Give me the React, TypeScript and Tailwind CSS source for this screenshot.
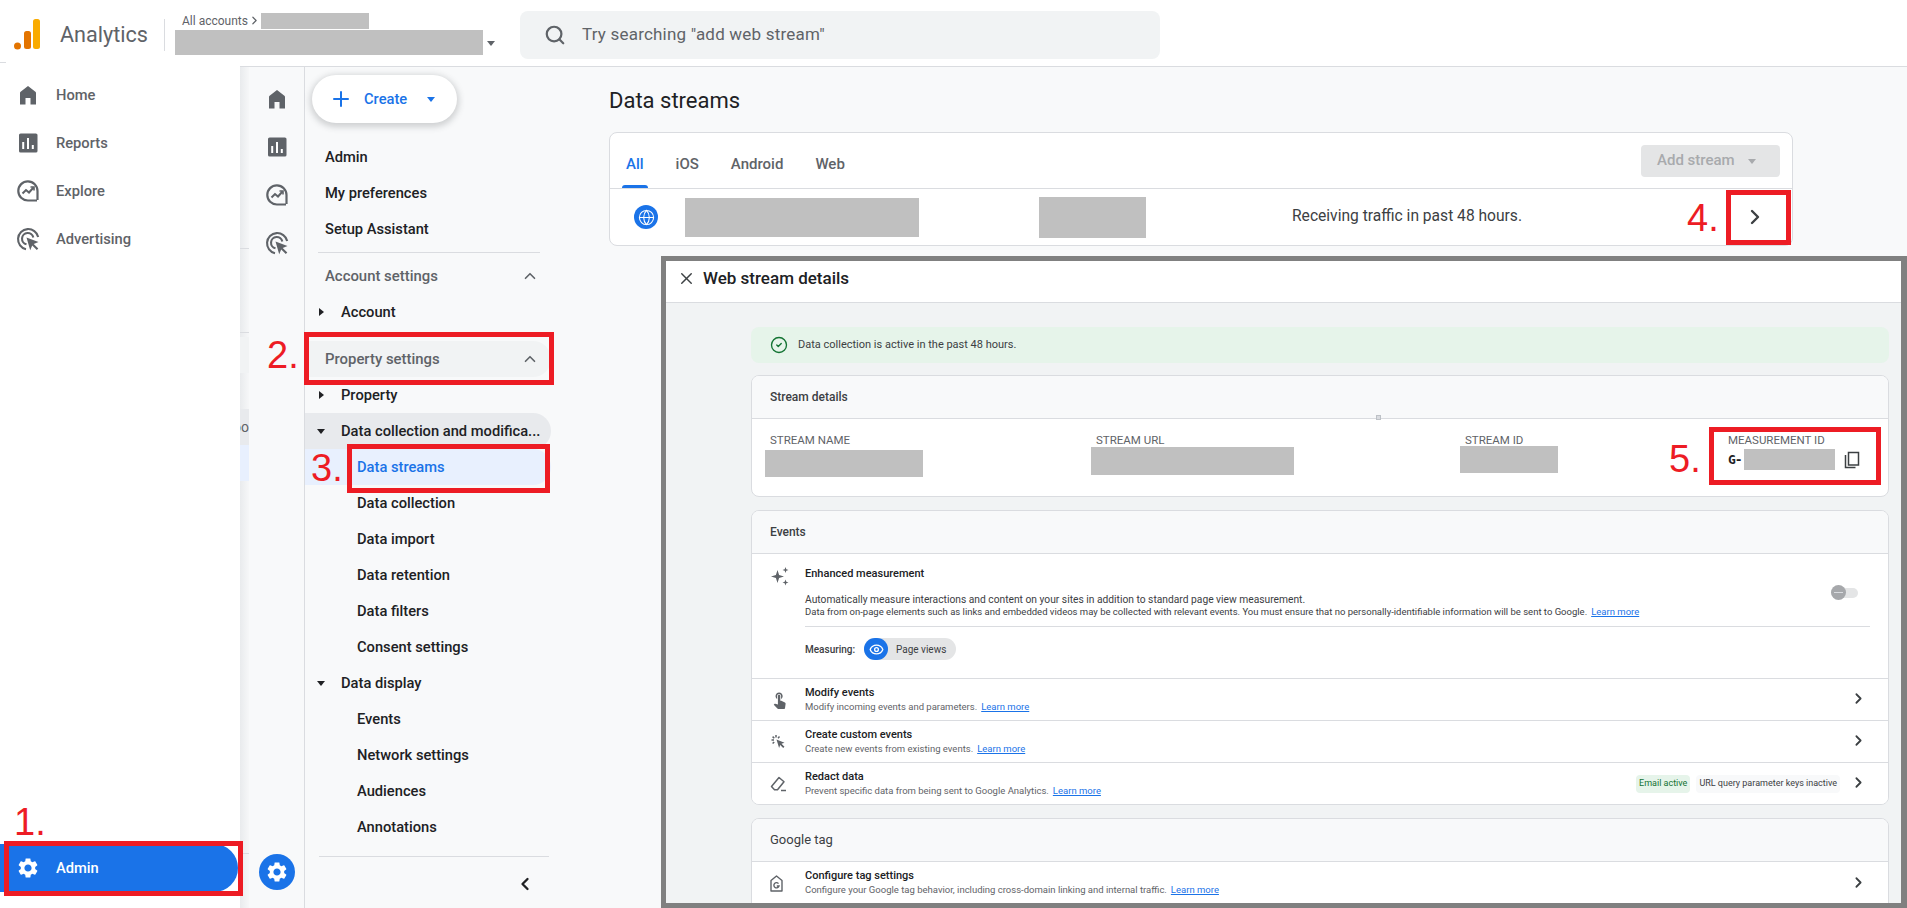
import React from 'react'
import {
  ChevronLeft,
  ChevronRight,
  ChevronUp,
  CircleCheck,
  Eye,
  Globe,
  Plus,
  Search,
  X,
} from 'lucide-react'

const gearPath =
  'M19.14 12.94c.04-.3.06-.61.06-.94 0-.32-.02-.64-.07-.94l2.03-1.58c.18-.14.23-.41.12-.61l-1.92-3.32c-.12-.22-.37-.29-.59-.22l-2.39.96c-.5-.38-1.03-.7-1.62-.94l-.36-2.54c-.04-.24-.24-.41-.48-.41h-3.84c-.24 0-.43.17-.47.41l-.36 2.54c-.59.24-1.13.57-1.62.94l-2.39-.96c-.22-.08-.47 0-.59.22L2.74 8.87c-.12.21-.08.47.12.61l2.03 1.58c-.05.3-.09.63-.09.94s.02.64.07.94l-2.03 1.58c-.18.14-.23.41-.12.61l1.92 3.32c.12.22.37.29.59.22l2.39-.96c.5.38 1.03.7 1.62.94l.36 2.54c.05.24.24.41.48.41h3.84c.24 0 .44-.17.47-.41l.36-2.54c.59-.24 1.13-.56 1.62-.94l2.39.96c.22.08.47 0 .59-.22l1.92-3.32c.12-.22.07-.47-.12-.61l-2.01-1.58zM12 15.6c-1.98 0-3.6-1.62-3.6-3.6s1.62-3.6 3.6-3.6 3.6 1.62 3.6 3.6-1.62 3.6-3.6 3.6z'

function HomeIcon() {
  return (
    <svg width="24" height="24" viewBox="0 0 24 24" fill="#5f6368">
      <path d="M4 21.5V10c0-.5.2-.9.6-1.2L12 3l7.4 5.8c.4.3.6.7.6 1.2v11.5h-5.5V15h-5v6.5z" />
    </svg>
  )
}

function ReportsIcon() {
  return (
    <svg width="24" height="24" viewBox="0 0 24 24">
      <rect x="3" y="2.5" width="18.5" height="19" rx="1.6" fill="#5f6368" />
      <path d="M7.2 11v7M12 7v11M16.8 14v4" stroke="#fff" strokeWidth="2" />
    </svg>
  )
}

function ExploreIcon() {
  return (
    <svg width="24" height="24" viewBox="0 0 24 24" fill="none" stroke="#5f6368">
      <path d="M21 21.5H12A9.6 9.6 0 1 1 21.5 12v9" strokeWidth="2.2" />
      <path d="M6.5 14.5l3.5-3.5 3 2.5 4.5-5" strokeWidth="2" />
      <path d="M14.5 8h3.5v3.5" strokeWidth="1.6" />
    </svg>
  )
}

function AdvertisingIcon() {
  return (
    <svg width="24" height="24" viewBox="0 0 24 24" fill="none" stroke="#5f6368">
      <path d="M10 22.2A10.2 10.2 0 1 1 22.2 10" strokeWidth="2.1" />
      <path d="M10.5 17.3A5.7 5.7 0 1 1 17.3 10.5" strokeWidth="2.1" />
      <path d="M10.5 10.5l12 4.4-4.8 2 4.6 4.7-1.5 1.5-4.6-4.6-2 4.7z" fill="#5f6368" stroke="none" />
    </svg>
  )
}

function GearIcon({ size }: { size: number }) {
  return (
    <svg width={size} height={size} viewBox="0 0 24 24" fill="#fff">
      <path d={gearPath} />
    </svg>
  )
}

function TouchIcon() {
  return (
    <svg width="19" height="19" viewBox="0 0 24 24" fill="#5f6368">
      <path d="M9 11.24V7.5C9 6.12 10.12 5 11.5 5S14 6.12 14 7.5v3.74c1.21-.81 2-2.18 2-3.74C16 5.01 13.99 3 11.5 3S7 5.01 7 7.5c0 1.56.79 2.93 2 3.74zm9.84 4.63l-4.54-2.26c-.17-.07-.35-.11-.54-.11H13v-6c0-.83-.67-1.5-1.5-1.5S10 6.67 10 7.5v10.74l-3.43-.72c-.08-.01-.15-.03-.24-.03-.31 0-.59.13-.79.33l-.79.8 4.94 4.94c.27.27.65.44 1.06.44h6.79c.75 0 1.33-.55 1.44-1.28l.75-5.27c.01-.07.02-.14.02-.2 0-.62-.38-1.16-.91-1.38z" />
    </svg>
  )
}

function ClickIcon() {
  return (
    <svg width="16" height="16" viewBox="0 0 16 16" fill="none" stroke="#5f6368" strokeWidth="1.5">
      <path d="M6.5 5.5l8 3.2-3 1.1 3 3-1.3 1.3-3-3-1.1 3z" fill="#5f6368" stroke="none" />
      <path d="M6 1v2.5M1.5 6H4M2.6 2.6l1.7 1.7M9.5 2.6L8 4.2M2.6 9.5l1.6-1.5" />
    </svg>
  )
}

function EraserIcon() {
  return (
    <svg width="17" height="16" viewBox="0 0 17 16" fill="none" stroke="#5f6368" strokeWidth="1.5">
      <path d="M1.5 10.5L9 1.5l5 4.2-6.5 8H4.5z" strokeLinejoin="round" />
      <path d="M11 14.5h5" />
    </svg>
  )
}

function TagIcon() {
  return (
    <svg width="13" height="17" viewBox="0 0 13 17" fill="none" stroke="#5f6368" strokeWidth="1.4">
      <path d="M1 5.5L6.5 1 12 5.5V16H1z" strokeLinejoin="round" />
      <path d="M8.5 8.6a2.6 2.6 0 1 0 .5 2.4H6.8" />
    </svg>
  )
}

function Caret({ color = '#5f6368', down = true }: { color?: string; down?: boolean }) {
  return (
    <svg width="10" height="10" viewBox="0 0 10 10" fill={color}>
      {down ? <path d="M1 3h8L5 8z" /> : <path d="M3 1l5 4-5 4z" />}
    </svg>
  )
}

function Redacted({ className }: { className: string }) {
  return <div className={`bg-[#c0c0c0] ${className}`} />
}

function Badge({ className, children }: { className: string; children: React.ReactNode }) {
  return (
    <div className={`absolute font-['Liberation_Sans',sans-serif] text-[38px] leading-none text-[#ed1c24] ${className}`}>
      {children}
    </div>
  )
}

function RedBox({ className }: { className: string }) {
  return <div className={`absolute border-[5px] border-[#ed1c24] ${className}`} />
}

function SideItem({ icon, label }: { icon: React.ReactNode; label: string }) {
  return (
    <div className="flex h-12 items-center pl-[16px]">
      <div className="flex w-[40px]">{icon}</div>
      <span className="text-[14.7px] font-medium text-[#5f6368]">{label}</span>
    </div>
  )
}

function NavLink({ label, depth = 0, expand }: { label: string; depth?: number; expand?: 'open' | 'closed' }) {
  return (
    <div className="flex h-9 items-center text-[14.7px] font-medium text-[#202124]">
      <div className="flex w-[36px] shrink-0 justify-end pr-[15px]">
        {expand && <Caret color="#202124" down={expand === 'open'} />}
      </div>
      <span className={depth === 1 ? 'pl-4' : ''}>{label}</span>
    </div>
  )
}

function SectionHead({ label, active }: { label: string; active?: boolean }) {
  return (
    <div className={`flex h-9 w-[246px] items-center justify-between rounded-r-full pl-5 pr-3 text-[14.9px] font-medium text-[#5f6368] ${active ? 'bg-[#f1f3f4]' : ''}`}>
      {label}
      <ChevronUp size={18} strokeWidth={2.2} color="#5f6368" />
    </div>
  )
}

function LearnMore() {
  return <span className="ml-1 text-[#1a73e8] underline">Learn more</span>
}

function EventRow({ icon, title, sub, tail, border = true }: { icon: React.ReactNode; title: string; sub: string; tail?: React.ReactNode; border?: boolean }) {
  return (
    <div className={`flex h-[42px] items-center bg-white pl-[18px] pr-[21px] ${border ? 'border-t border-[#dadce0]' : ''}`}>
      <div className="flex w-[35px] shrink-0">{icon}</div>
      <div className="flex-1">
        <div className="text-[11px] leading-[14px] font-medium text-[#202124]">{title}</div>
        <div className="text-[9.5px] leading-[14px] text-[#5f6368]">
          {sub}
          <LearnMore />
        </div>
      </div>
      {tail}
      <ChevronRight size={17} strokeWidth={2.5} color="#3c4043" className="ml-[10px] -mt-[2px]" />
    </div>
  )
}

function MetaCol({ label, className, children }: { label: string; className: string; children: React.ReactNode }) {
  return (
    <div className={`shrink-0 ${className}`}>
      <div className="text-[11.5px] leading-[14px] text-[#5f6368]">{label}</div>
      {children}
    </div>
  )
}

export default function App() {
  return (
    <div className="relative flex h-[908px] w-[1907px] flex-col overflow-hidden bg-[#f8f9fa] font-['Roboto',sans-serif]">
      {/* top bar */}
      <header className="flex h-[67px] shrink-0 items-center border-b border-[#dadce0] bg-white pt-[4px]">
        <svg width="28" height="32" viewBox="0 0 28 32" className="ml-[13px]">
          <circle cx="4.5" cy="27" r="3.5" fill="#e37400" />
          <rect x="11" y="12" width="7" height="18" rx="2.5" fill="#e37400" />
          <rect x="20" y="0" width="7" height="30" rx="2.5" fill="#f9ab00" />
        </svg>
        <span className="ml-[19px] text-[21.6px] text-[#5f6368]">Analytics</span>
        <div className="ml-[16px] h-8 w-px bg-[#dadce0]" />
        <div className="-mt-[4px] ml-[10px] w-[345px]">
          <div className="flex h-[19px] items-center pl-[7px] text-[12px] text-[#5f6368]">
            All accounts
            <ChevronRight size={13} strokeWidth={2.2} />
            <Redacted className="h-4 w-[108px]" />
          </div>
          <div className="flex items-center">
            <Redacted className="h-[25px] w-[308px]" />
            <div className="ml-[3px]"><Caret /></div>
          </div>
        </div>
        <div className="flex h-12 w-[640px] items-center rounded-lg bg-[#f1f3f4] pl-[24px] text-[17px] tracking-[0.2px] text-[#5f6368]">
          <Search size={22} strokeWidth={2.4} color="#5f6368" />
          <span className="ml-[16px]">Try searching "add web stream"</span>
        </div>
      </header>

      <div className="flex min-h-0 flex-1">
        {/* slide-out nav */}
        <aside className="relative z-10 -mt-[3px] flex w-[240px] shrink-0 flex-col bg-white pt-[7px]">
          <SideItem icon={<HomeIcon />} label="Home" />
          <SideItem icon={<ReportsIcon />} label="Reports" />
          <SideItem icon={<ExploreIcon />} label="Explore" />
          <SideItem icon={<AdvertisingIcon />} label="Advertising" />
          <div className="mt-auto mb-[16px] flex h-12 w-[238px] items-center rounded-r-full bg-[#1a73e8] pl-[16px] text-[14.7px] font-medium text-white">
            <div className="flex w-[40px]"><GearIcon size={24} /></div>
            Admin
          </div>
        </aside>

        {/* what is left of the page under the slide-out */}
        <div className="flex w-[9px] shrink-0 flex-col bg-gradient-to-r from-[#e9ebed] to-[#f6f7f8] text-[14px] text-[#5f6368]">
          <div className="mt-[181px] h-px bg-[#dadce0]" />
          <div className="mt-[83px] h-px bg-[#dadce0]" />
          <div className="mt-[4px] h-9 bg-[#f1f3f4]" />
          <div className="mt-9 flex h-9 items-center justify-end overflow-hidden bg-[#e8eaed]">oo</div>
          <div className="h-9 bg-[#e8f0fe]" />
          <div className="mt-[372px] h-px bg-[#dadce0]" />
        </div>

        {/* icon rail */}
        <div className="flex w-[56px] shrink-0 flex-col items-center border-r border-[#dadce0] pt-[8px]">
          {[<HomeIcon key="h" />, <ReportsIcon key="r" />, <ExploreIcon key="e" />, <AdvertisingIcon key="a" />].map((icon) => (
            <div key={icon.key} className="flex h-12 items-center">{icon}</div>
          ))}
          <div className="mt-auto mb-[18px] flex h-9 w-9 items-center justify-center rounded-full bg-[#1a73e8]">
            <GearIcon size={24} />
          </div>
        </div>

        {/* admin nav */}
        <nav className="flex w-[248px] shrink-0 flex-col pt-[8px]">
          <div className="ml-[7px] flex h-12 w-[145px] items-center rounded-full bg-white pl-[17px] text-[14.7px] font-medium text-[#1a73e8] shadow-[0_2px_6px_2px_rgba(60,64,67,0.22)]">
            <Plus size={24} strokeWidth={2} color="#1a73e8" />
            <span className="ml-[11px]">Create</span>
            <span className="ml-[19px]"><Caret color="#1a73e8" /></span>
          </div>
          <div className="mt-4 pl-5 text-[14.7px] font-medium text-[#202124]">
            <div className="flex h-9 items-center">Admin</div>
            <div className="flex h-9 items-center">My preferences</div>
            <div className="flex h-9 items-center">Setup Assistant</div>
          </div>
          <div className="mt-[5px] mb-[5px] ml-[13px] h-px w-[222px] bg-[#dadce0]" />
          <SectionHead label="Account settings" />
          <NavLink label="Account" expand="closed" />
          <div className="h-[11px]" />
          <SectionHead label="Property settings" active />
          <NavLink label="Property" expand="closed" />
          <div className="w-[246px] rounded-r-full bg-[#e8eaed]">
            <NavLink label="Data collection and modifica..." expand="open" />
          </div>
          <div className="w-[246px] rounded-r-full bg-[#e8f0fe]">
            <div className="flex h-9 items-center pl-[52px] text-[14.7px] font-medium text-[#1a73e8]">Data streams</div>
          </div>
          <NavLink label="Data collection" depth={1} />
          <NavLink label="Data import" depth={1} />
          <NavLink label="Data retention" depth={1} />
          <NavLink label="Data filters" depth={1} />
          <NavLink label="Consent settings" depth={1} />
          <NavLink label="Data display" expand="open" />
          <NavLink label="Events" depth={1} />
          <NavLink label="Network settings" depth={1} />
          <NavLink label="Audiences" depth={1} />
          <NavLink label="Annotations" depth={1} />
          <div className="mt-[11px] ml-[14px] h-px w-[230px] bg-[#dadce0]" />
          <div className="mt-[17px] flex justify-end pr-[18px]">
            <ChevronLeft size={20} strokeWidth={2.8} color="#202124" />
          </div>
        </nav>

        {/* main column */}
        <main className="flex min-w-0 flex-1 flex-col">
          <h1 className="mt-[18px] h-[47px] pl-[56px] text-[22px] leading-8 text-[#202124]">Data streams</h1>
          <div className="ml-[56px] h-[114px] w-[1184px] shrink-0 overflow-hidden rounded-lg border border-[#dadce0] bg-white">
            <div className="flex h-[56px] items-center justify-between border-b border-[#dadce0] pl-[12px] pr-[12px] text-[15px] font-medium text-[#5f6368]">
              <div className="flex h-full gap-[32px]">
                <div className="relative -mr-[4px] flex items-center px-[4px] pt-[8px] text-[#1a73e8]">
                  All
                  <div className="absolute right-0 bottom-0 left-0 h-[3px] rounded-t-sm bg-[#1a73e8]" />
                </div>
                <div className="flex items-center pt-[8px]">iOS</div>
                <div className="flex items-center pt-[8px]">Android</div>
                <div className="flex items-center pt-[8px]">Web</div>
              </div>
              <div className="flex h-8 w-[139px] items-center rounded bg-[#e4e5e6] pl-4 text-[#a8aaad]">
                Add stream
                <span className="ml-[12px]"><Caret color="#a8aaad" /></span>
              </div>
            </div>
            <div className="flex h-[56px] items-center">
              <div className="ml-[24px] flex h-6 w-6 items-center justify-center rounded-full bg-[#1a73e8]">
                <Globe size={17} color="#fff" strokeWidth={1.5} />
              </div>
              <Redacted className="ml-[27px] h-[39px] w-[234px]" />
              <Redacted className="ml-[120px] h-[41px] w-[107px]" />
              <span className="ml-[146px] text-[15.6px] text-[#3c4043]">Receiving traffic in past 48 hours.</span>
              <ChevronRight size={24} strokeWidth={2.4} color="#3c4043" className="ml-[221px]" />
            </div>
          </div>

          {/* web stream details panel */}
          <section className="mt-[10px] ml-[108px] flex min-h-0 flex-1 flex-col overflow-hidden border-[5px] border-r-[6px] border-[#808080] bg-[#f1f3f4]">
            <div className="flex h-[42px] shrink-0 items-center border-b border-[#dadce0] bg-white pb-[6px] pl-[11px] text-[17px] font-medium text-[#202124]">
              <X size={19} strokeWidth={1.8} color="#3c4043" />
              <span className="ml-[7px]">Web stream details</span>
            </div>
            <div className="pt-[24px] pr-[12px] pl-[85px]">
              <div className="flex h-9 items-center rounded-lg bg-[#e6f4ea] pl-[19px] text-[11px] text-[#3c4043]">
                <CircleCheck size={18} color="#137333" strokeWidth={1.8} />
                <span className="ml-[10px]">Data collection is active in the past 48 hours.</span>
              </div>

              <div className="relative mt-[12px] h-[122px] overflow-hidden rounded-lg border border-[#dadce0] bg-white">
                <div className="flex h-[43px] items-center border-b border-[#dadce0] bg-[#f8f9fa] pl-[18px] text-[12px] font-medium text-[#3c4043]">
                  Stream details
                </div>
                <div className="flex pt-[14px] pl-[18px]">
                  <MetaCol label="STREAM NAME" className="w-[326px]">
                    <Redacted className="-ml-[5px] mt-[3px] h-[27px] w-[158px]" />
                  </MetaCol>
                  <MetaCol label="STREAM URL" className="w-[369px]">
                    <Redacted className="-ml-[5px] h-[28px] w-[203px]" />
                  </MetaCol>
                  <MetaCol label="STREAM ID" className="w-[263px]">
                    <Redacted className="-ml-[5px] -mt-[1px] h-[27px] w-[98px]" />
                  </MetaCol>
                  <MetaCol label="MEASUREMENT ID" className="w-[170px]">
                    <div className="flex items-center pt-[2px]">
                      <span className="font-['DejaVu_Sans_Mono',monospace] text-[13px] font-bold tracking-[-1px] text-[#202124]">G-</span>
                      <Redacted className="ml-[2px] h-[21px] w-[91px]" />
                      <svg width="18" height="18" viewBox="0 0 18 18" fill="none" stroke="#3c4043" strokeWidth="1.5" className="ml-[8px]">
                        <rect x="5.5" y="1.5" width="10" height="12.5" />
                        <path d="M2.5 4v12.5h10" />
                      </svg>
                    </div>
                  </MetaCol>
                </div>
              </div>

              <div className="mt-[13px] overflow-hidden rounded-lg border border-[#dadce0] bg-white">
                <div className="flex h-[43px] items-center border-b border-[#dadce0] bg-[#f8f9fa] pl-[18px] text-[12px] font-medium text-[#3c4043]">
                  Events
                </div>
                <div className="h-[124px] pl-[18px]">
                  <div className="flex">
                    <svg width="20" height="20" viewBox="0 0 20 20" fill="#5f6368" className="mt-[12px]">
                      <path d="M7.5 4l1.6 4.9L14 10.5l-4.9 1.6L7.5 17l-1.6-4.9L1 10.5l4.9-1.6zM15.5 1l.8 2.2 2.2.8-2.2.8-.8 2.2-.8-2.2-2.2-.8 2.2-.8zM15.5 13.5l.8 2.2 2.2.8-2.2.8-.8 2.2-.8-2.2-2.2-.8 2.2-.8z" />
                    </svg>
                    <div className="ml-[15px] flex-1 pr-[18px]">
                      <div className="flex items-start justify-between pr-[12px]">
                        <div className="pt-[13px] text-[11px] leading-[14px] font-medium text-[#202124]">Enhanced measurement</div>
                        <div className="relative mt-[34px] h-[10px] w-[27px] rounded-full bg-[#e4e5e6]">
                          <div className="absolute -top-[3px] left-0 flex h-[15px] w-[15px] items-center justify-center rounded-full bg-[#a6a8ab]">
                            <div className="h-px w-[9px] bg-[#dadce0]" />
                          </div>
                        </div>
                      </div>
                      <div className="-mt-[4px] text-[10.25px] leading-[12px] text-[#3c4043]">
                        Automatically measure interactions and content on your sites in addition to standard page view measurement.
                      </div>
                      <div className="text-[9.5px] leading-[12px] text-[#3c4043]">
                        Data from on-page elements such as links and embedded videos may be collected with relevant events. You must ensure that no personally-identifiable information will be sent to Google.
                        <LearnMore />
                      </div>
                      <div className="mt-[8px] h-px bg-[#dadce0]" />
                      <div className="mt-[11px] flex items-center">
                        <span className="w-[59px] text-[10px] font-medium text-[#3c4043]">Measuring:</span>
                        <div className="flex h-[22px] w-[92px] items-center rounded-full bg-[#e4e5e6] text-[10px] text-[#3c4043]">
                          <div className="flex h-[22px] w-[24px] items-center justify-center rounded-full bg-[#1a73e8]">
                            <Eye size={15} color="#fff" strokeWidth={2.2} />
                          </div>
                          <span className="ml-[8px]">Page views</span>
                        </div>
                      </div>
                    </div>
                  </div>
                </div>
                <EventRow icon={<TouchIcon />} title="Modify events" sub="Modify incoming events and parameters." />
                <EventRow icon={<ClickIcon />} title="Create custom events" sub="Create new events from existing events." />
                <EventRow
                  icon={<EraserIcon />}
                  title="Redact data"
                  sub="Prevent specific data from being sent to Google Analytics."
                  tail={
                    <div className="flex gap-[6px] text-[9px]">
                      <div className="flex h-[18px] items-center rounded-sm bg-[#e6f4ea] px-[3px] text-[#137333]">Email active</div>
                      <div className="flex h-[18px] items-center rounded-sm bg-[#f8f9fa] px-[3px] text-[#3c4043]">URL query parameter keys inactive</div>
                    </div>
                  }
                />
              </div>

              <div className="mt-[13px] overflow-hidden rounded-t-lg border border-[#dadce0] bg-white">
                <div className="flex h-[43px] items-center border-b border-[#dadce0] bg-[#f8f9fa] pl-[18px] text-[13px] text-[#3c4043]">
                  Google tag
                </div>
                <EventRow
                  border={false}
                  icon={<TagIcon />}
                  title="Configure tag settings"
                  sub="Configure your Google tag behavior, including cross-domain linking and internal traffic."
                />
              </div>
            </div>
          </section>
        </main>
      </div>

      {/* small piece of the slide-out's own header line */}
      <div className="absolute top-[62px] left-0 z-20 h-px w-[6px] bg-[#dadce0]" />

      {/* annotations */}
      <div className="absolute top-[415px] left-[1376px] h-[5px] w-[5px] border border-[#bdc1c6] bg-[#dadce0]" />
      <RedBox className="top-[841px] left-[4px] z-20 h-[55px] w-[239px]" />
      <RedBox className="top-[332px] left-[304px] z-20 h-[53px] w-[250px]" />
      <RedBox className="top-[444px] left-[347px] z-20 h-[49px] w-[203px]" />
      <RedBox className="top-[190px] left-[1726px] z-20 h-[55px] w-[65px]" />
      <RedBox className="top-[427px] left-[1709px] z-20 h-[58px] w-[172px]" />
      <Badge className="top-[803px] left-[14px] z-20">1.</Badge>
      <Badge className="top-[336px] left-[267px] z-20">2.</Badge>
      <Badge className="top-[449px] left-[311px] z-20">3.</Badge>
      <Badge className="top-[199px] left-[1687px] z-20">4.</Badge>
      <Badge className="top-[440px] left-[1669px] z-20">5.</Badge>
    </div>
  )
}
